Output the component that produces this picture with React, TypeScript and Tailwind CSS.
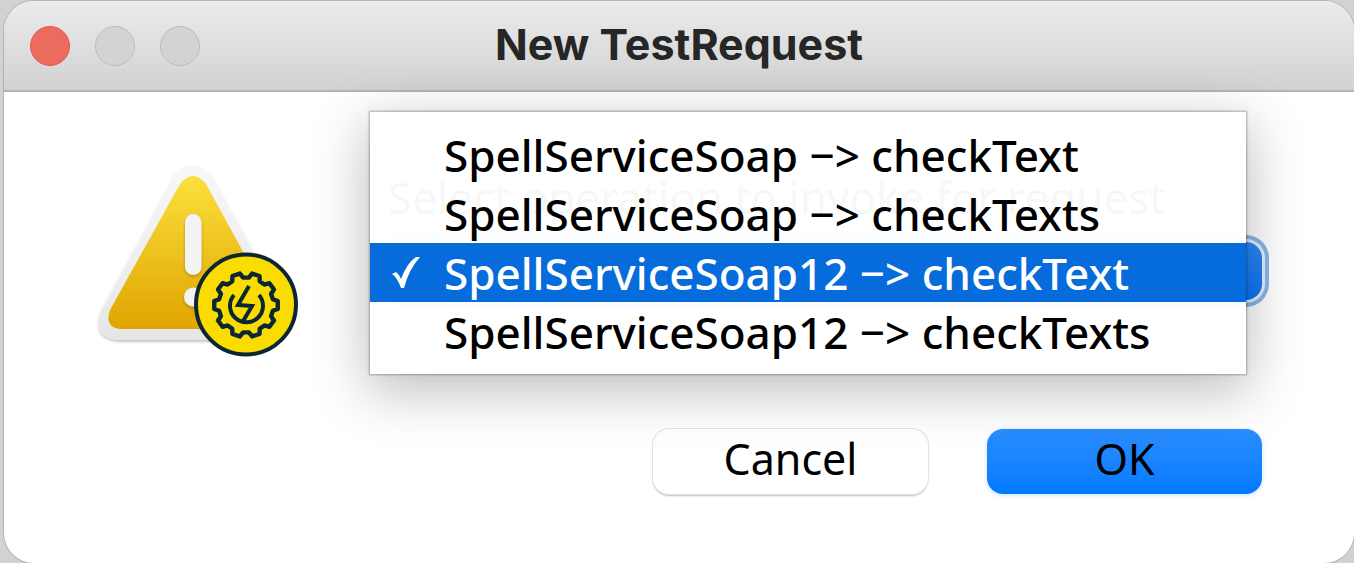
import { useState } from "react";

const operations = [
  "SpellServiceSoap −> checkText",
  "SpellServiceSoap −> checkTexts",
  "SpellServiceSoap12 −> checkText",
  "SpellServiceSoap12 −> checkTexts",
];

const gearPoints = () => {
  const pts: string[] = [];
  const teeth = 10;
  const at = (r: number, deg: number) => {
    const a = (deg * Math.PI) / 180;
    return `${(150 + r * Math.cos(a)).toFixed(2)} ${(141 + r * Math.sin(a)).toFixed(2)}`;
  };
  for (let i = 0; i < teeth; i++) {
    const c = -72 + i * 36;
    pts.push(at(32, c - 7), at(32, c + 7), at(27.5, c + 12), at(27.5, c + 24));
  }
  return "M" + pts.join("L") + "Z";
};

function WarningIcon() {
  return (
    <svg viewBox="0 0 206 206" className="size-[206px] shrink-0" role="img" aria-label="Warning">
      <defs>
        <linearGradient id="yellow" x1="0" y1="0" x2="0" y2="1">
          <stop offset="0" stopColor="#fbe03e" />
          <stop offset="1" stopColor="#e0a400" />
        </linearGradient>
        <linearGradient id="rim" x1="0" y1="0" x2="0" y2="1">
          <stop offset="0" stopColor="#f8f8f8" />
          <stop offset="1" stopColor="#e6e6e6" />
        </linearGradient>
        <filter id="soft" x="-20%" y="-20%" width="140%" height="140%">
          <feDropShadow dx="0" dy="1.5" stdDeviation="1.5" floodColor="#000" floodOpacity="0.28" />
        </filter>
      </defs>
      <path
        d="M79.500 11Q97 -8 114.500 11L190 148Q198 173 173 176H22Q-4 173 5 148Z"
        fill="url(#rim)"
        filter="url(#soft)"
      />
      <path
        d="M84 20Q97 4 110 20L179 146Q184 163 170 165H24Q8 163 14 146Z"
        fill="url(#yellow)"
      />
      <g fill="#f3f3f3" filter="url(#soft)">
        <rect x="89" y="50" width="16.500" height="61" rx="8.200" />
        <circle cx="97.500" cy="133" r="9.500" />
      </g>
      <circle cx="150" cy="140.500" r="50" fill="#fadc00" stroke="#0b2733" strokeWidth="4" />
      <path d={gearPoints()} fill="none" stroke="#0b2733" strokeWidth="4.400" strokeLinejoin="round" />
      <path d="M138 131A16.500 16.500 0 1 0 163 131" fill="none" stroke="#0b2733" strokeWidth="4" />
      <path d="M153 122L142 141L156 142L146 159" fill="none" stroke="#0b2733" strokeWidth="4" />
    </svg>
  );
}

export default function App() {
  const [selected, setSelected] = useState(2);

  return (
    <div className="flex min-h-screen bg-[#d2d2d2] pl-1 pt-px font-['Noto_Sans',sans-serif] text-black">
      <main className="flex min-w-0 flex-1 flex-col overflow-hidden rounded-[30px] bg-white shadow-[0_0_0_1px_#b4b4b4]">
        <header className="grid h-[91px] grid-cols-[1fr_auto_1fr] items-center border-b-2 border-[#b3b3b3] bg-linear-to-b from-[#ebebeb] to-[#d2d2d2] px-[26px]">
          <div className="flex gap-[25px]">
            <button aria-label="Close" className="size-10 rounded-full border border-[#dc5a50] bg-[#ed6a5e]" />
            <button aria-label="Minimize" className="size-10 rounded-full border border-[#bcbcbc] bg-[#d3d3d3]" />
            <button aria-label="Zoom" className="size-10 rounded-full border border-[#bcbcbc] bg-[#d3d3d3]" />
          </div>
          <h1 className="pb-[2px] font-['Inter',sans-serif] text-[43px] leading-none font-bold text-[#262626]">New TestRequest</h1>
        </header>

        <div className="flex items-start gap-[86px] pt-[72px] pr-[92px] pl-[92px]">
          <WarningIcon />
          <form className="flex min-w-0 flex-1 flex-col" onSubmit={(e) => e.preventDefault()}>
            <label htmlFor="operation" className="text-[44px] leading-[66px] whitespace-nowrap">
              Select operation to invoke for request
            </label>
            <div className="relative mt-3">
              <select
                id="operation"
                value={selected}
                onChange={(e) => setSelected(Number(e.target.value))}
                className="block h-[58px] w-full appearance-none rounded-2xl bg-white px-5 text-[44px] text-transparent shadow-[0_0_0_3px_#e3effc,0_0_0_7px_#8ab6e8] outline-none"
              >
                {operations.map((name, i) => (
                  <option key={name} value={i}>{name}</option>
                ))}
              </select>
              <div className="pointer-events-none absolute inset-y-0 right-0 flex w-14 items-center justify-center rounded-2xl bg-linear-to-b from-[#2c88f5] to-[#0574f6]">
                <svg viewBox="0 0 24 34" className="h-[34px] w-6" fill="none" stroke="white" strokeWidth="3">
                  <path d="M4 12L12 4L20 12M4 22L12 30L20 22" />
                </svg>
              </div>
              <ul
                role="listbox"
                aria-label="Operations"
                className="absolute -top-[130px] right-4 -left-[18px] bg-white/97 py-[13px] shadow-[0_0_2px_1px_rgba(0,0,0,0.3),0_14px_50px_4px_rgba(0,0,0,0.25)]"
              >
                {operations.map((name, i) => (
                  <li
                    key={name}
                    role="option"
                    aria-selected={i === selected}
                    onClick={() => setSelected(i)}
                    className={
                      i === selected
                        ? "flex h-[59px] items-center bg-[#066cdb] text-white"
                        : "flex h-[59px] items-center"
                    }
                  >
                    <span className="flex w-[74px] shrink-0 items-center pl-[22px]">
                      {i === selected && (
                        <svg viewBox="0 0 28 32" className="h-8 w-7" fill="currentColor" aria-hidden="true">
                          <path d="M0 17L4 15Q7 17 9 22Q15 6 24 0H28Q17 12 12 31H9Q5 20 0 17Z" />
                        </svg>
                      )}
                    </span>
                    <span className="text-[44px] leading-none font-medium whitespace-nowrap">{name}</span>
                  </li>
                ))}
              </ul>
            </div>
            <div className="mt-[129px] flex justify-end gap-[59px]">
              <button type="button" className="h-[65px] w-[275px] rounded-2xl bg-white pb-[6px] text-[43px] leading-none shadow-[0_0_0_1px_#e3e3e3,0_2px_2px_rgba(0,0,0,0.25)]">
                Cancel
              </button>
              <button type="submit" className="h-[65px] w-[275px] rounded-2xl bg-linear-to-b from-[#2a8dff] to-[#007aff] pb-[6px] text-[43px] leading-none shadow-[0_1px_4px_rgba(0,122,255,0.25)]">
                OK
              </button>
            </div>
          </form>
        </div>
      </main>
    </div>
  );
}
